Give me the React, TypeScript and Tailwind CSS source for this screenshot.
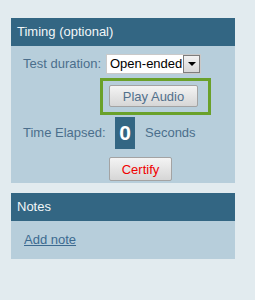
import React from 'react';

const btn =
  'bg-gradient-to-b from-[#f4f4f4] to-[#d6d6d6] border border-[#a3a3a3] rounded-[2px] text-[13px] leading-none';

const App: React.FC = () => {
  return (
    <div
      className="min-h-screen bg-[#e2ebef] pt-[18px] pl-[11px]"
      style={{ fontFamily: '"Liberation Sans", Arial, sans-serif' }}
    >
      {/* Timing panel */}
      <div className="w-[224px]">
        <div className="h-[28px] bg-[#336683] pl-[6px] text-[13px] leading-[28px] text-[#f2f6f8]">
          Timing (optional)
        </div>
        <div className="bg-[#b7cedb] pt-[8px] pb-[2px] text-[13px] text-[#4b6e8c]">
          <div className="flex h-[20px] items-center pl-[12px]">
            <span className="w-[83px]">Test duration:</span>
            <div className="flex h-[20px] w-[95px] items-center border border-[#c9c9c9] bg-white">
              <span className="flex-1 pl-[3px] text-black">Open-ended</span>
              <div className="flex h-[18px] w-[17px] items-center justify-center border border-[#7d7d7d] bg-gradient-to-b from-[#f2f2f2] to-[#d8d8d8]">
                <div className="h-0 w-0 border-x-[4px] border-t-[4px] border-x-transparent border-t-black" />
              </div>
            </div>
          </div>

          <div className="mt-[4px] ml-[89px] h-[37px] w-[111px] border-[3px] border-[#6aa12a] pt-[4px] pl-[6px]">
            <button className={`${btn} h-[22px] w-[89px] text-[#52708c]`}>Play Audio</button>
          </div>

          <div className="mt-[2px] flex h-[32px] items-center pl-[12px]">
            <span className="w-[92px]">Time Elapsed:</span>
            <div className="flex h-[32px] w-[20px] items-center justify-center bg-[#336683] text-[21px] font-bold text-white">
              0
            </div>
            <span className="ml-[10px]">Seconds</span>
          </div>

          <div className="mt-[8px] ml-[98px]">
            <button className={`${btn} h-[24px] w-[63px] text-[#f00000]`}>Certify</button>
          </div>
        </div>
      </div>

      {/* Notes panel */}
      <div className="mt-[10px] w-[224px]">
        <div className="h-[28px] bg-[#336683] pl-[6px] text-[13px] leading-[28px] text-[#f2f6f8]">
          Notes
        </div>
        <div className="flex h-[38px] items-center bg-[#b7cedb] pl-[13px] text-[13px]">
          <a href="#" className="text-[#3c6a90] underline">
            Add note
          </a>
        </div>
      </div>
    </div>
  );
};

export default App;
